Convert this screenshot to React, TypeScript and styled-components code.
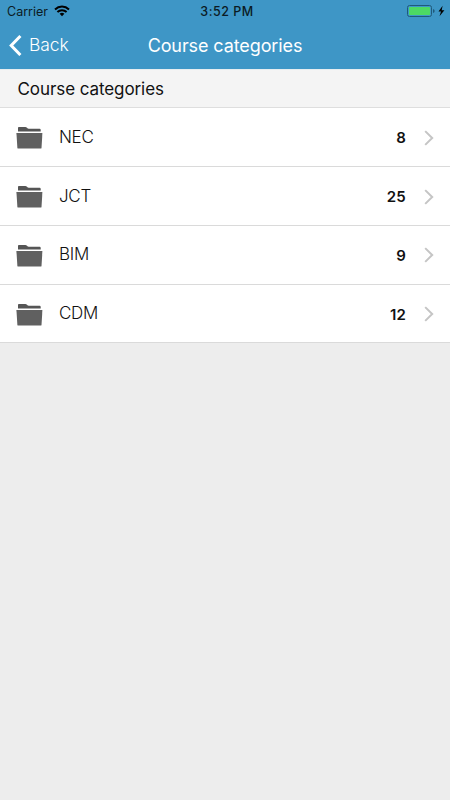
import React from 'react';
import styled, { createGlobalStyle } from 'styled-components';

const GlobalStyle = createGlobalStyle`
  * { box-sizing: border-box; }
  body { margin: 0; background: #ededed; font-family: Inter, "Liberation Sans", sans-serif; }
`;

const Screen = styled.main`
  min-height: 800px;
  background: #ededed;
  color: #111;
`;

const Header = styled.header`
  height: 69px;
  background: #3e96c6;
`;

const StatusBar = styled.div`
  display: grid;
  grid-template-columns: 1fr auto 1fr;
  align-items: center;
  height: 22px;
  padding: 0 4px 0 7px;
  color: #0b1b24;
`;

const Carrier = styled.div`
  display: flex;
  align-items: center;
  gap: 6px;
  font-size: 12.5px;
`;

const Clock = styled.time`
  font-size: 12.5px;
  font-weight: 500;
  letter-spacing: 0.5px;
  margin-left: 1px;
`;

const Power = styled.div`
  display: flex;
  justify-content: flex-end;
  align-items: center;
`;

const NavBar = styled.nav`
  display: grid;
  grid-template-columns: 1fr auto 1fr;
  align-items: center;
  height: 46px;
  padding: 0 9px;
  color: #fff;
`;

const BackButton = styled.button`
  display: flex;
  align-items: center;
  gap: 6px;
  padding: 0;
  border: 0;
  background: none;
  color: inherit;
  font: 300 17.5px/22px Inter, sans-serif;
  letter-spacing: -0.1px;
`;

const Title = styled.h1`
  margin: 0;
  font-size: 18px;
  font-weight: 400;
  letter-spacing: -0.1px;
`;

const SectionTitle = styled.h2`
  display: flex;
  align-items: center;
  height: 39.4px;
  margin: 0;
  padding: 0 17.5px;
  background: #f4f4f4;
  border-top: 1px solid #e7edf0;
  border-bottom: 1px solid #dedede;
  font-size: 17px;
  font-weight: 400;
  letter-spacing: -0.08px;
`;

const List = styled.ul`
  margin: 0;
  padding: 0;
  list-style: none;
`;

const Row = styled.li`
  display: flex;
  align-items: center;
  height: 58.75px;
  padding: 1px 16px 0;
  background: #fff;
  border-bottom: 1px solid #dadada;
`;

const Name = styled.span`
  flex: 1;
  margin: 0 0 2px 16px;
  font-size: 17px;
  font-weight: 300;
  letter-spacing: -0.3px;
`;

const Count = styled.span`
  margin-right: 18px;
  font-size: 15px;
  font-weight: 600;
  letter-spacing: 0.2px;
`;

const Wifi = () => (
  <svg width="16" height="12" viewBox="0 0 16 12" fill="none" stroke="#000" strokeWidth="2">
    <path d="M1 4.4C5 .6 11 .6 15 4.4M3.4 7C6 4.6 10 4.6 12.6 7" />
    <path d="M8 11.2 5.6 8.8Q8 6.8 10.4 8.8Z" fill="#000" stroke="none" />
  </svg>
);

const Battery = () => (
  <svg width="40" height="14" viewBox="0 0 40 14">
    <rect x="1.5" y="1.5" width="24" height="11" rx="2" fill="none" stroke="#205a7b" />
    <rect x="3" y="3" width="21" height="8" rx="0.7" fill="#4cd964" />
    <path d="M27 5Q28.7 5.5 28.7 7T27 9Z" fill="#205a7b" />
    <path d="M36.6 1.8 32.5 7.5H35L33.5 12.2 38.4 6.3H35.7Z" fill="#000" />
  </svg>
);

const BackArrow = () => (
  <svg width="14" height="22" viewBox="0 0 14 22" fill="none" stroke="#fff" strokeWidth="3">
    <path d="M11.4 2 2.2 11.5 11.4 21" />
  </svg>
);

const Folder = () => (
  <svg width="27" height="23" viewBox="0 0 27 23" fill="#606060">
    <path d="M2 5.6V1.8Q2 .9 2.9.9H9.3Q10.3.9 11 1.8T12.8 2.8H23.6Q24.7 2.8 24.7 3.9V5.6Z" fill="#555" />
    <path d="M.4 7H26.4L25.5 21.9Q25.4 22.6 24.7 22.6H2.3Q1.5 22.6 1.4 21.9Z" />
  </svg>
);

const Chevron = () => (
  <svg width="10" height="16" viewBox="0 0 10 16" fill="none" stroke="#c5c5c5" strokeWidth="2">
    <path d="M1.2 1.1 8.2 8 1.2 14.9" />
  </svg>
);

const categories = [
  { name: 'NEC', count: 8 },
  { name: 'JCT', count: 25 },
  { name: 'BIM', count: 9 },
  { name: 'CDM', count: 12 },
];

export default function App() {
  return (
    <Screen>
      <GlobalStyle />
      <Header>
        <StatusBar>
          <Carrier>Carrier <Wifi /></Carrier>
          <Clock>3:52 PM</Clock>
          <Power><Battery /></Power>
        </StatusBar>
        <NavBar>
          <BackButton><BackArrow />Back</BackButton>
          <Title>Course categories</Title>
        </NavBar>
      </Header>
      <SectionTitle>Course categories</SectionTitle>
      <List>
        {categories.map(({ name, count }) => (
          <Row key={name}>
            <Folder />
            <Name>{name}</Name>
            <Count>{count}</Count>
            <Chevron />
          </Row>
        ))}
      </List>
    </Screen>
  );
}
